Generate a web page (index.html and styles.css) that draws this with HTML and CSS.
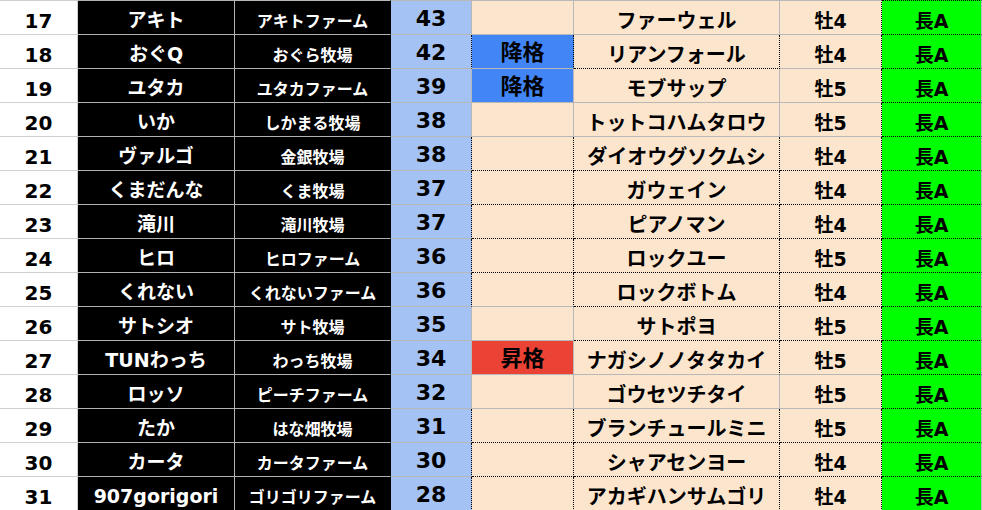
FILE: index.html
```html
<!DOCTYPE html>
<html lang="ja">
<head>
<meta charset="utf-8">
<title>Sheet</title>
<link rel="stylesheet" href="styles.css">
</head>
<body>
<div class="sheet">
  <div class="c a top">17</div><div class="c b top">アキト</div><div class="c f top">アキトファーム</div><div class="c d top">43</div><div class="c e top"></div><div class="c h top">ファーウェル</div><div class="c s top dr">牡4</div><div class="c g top dt db">長A</div>
  <div class="c a">18</div><div class="c b">おぐQ</div><div class="c f">おぐら牧場</div><div class="c d dr">42</div><div class="c e down dr">降格</div><div class="c h dr db">リアンフォール</div><div class="c s dr">牡4</div><div class="c g db">長A</div>
  <div class="c a">19</div><div class="c b">ユタカ</div><div class="c f">ユタカファーム</div><div class="c d">39</div><div class="c e down">降格</div><div class="c h">モブサップ</div><div class="c s dr">牡5</div><div class="c g db">長A</div>
  <div class="c a">20</div><div class="c b">いか</div><div class="c f">しかまる牧場</div><div class="c d">38</div><div class="c e"></div><div class="c h">トットコハムタロウ</div><div class="c s dr">牡5</div><div class="c g db">長A</div>
  <div class="c a">21</div><div class="c b">ヴァルゴ</div><div class="c f">金銀牧場</div><div class="c d dr">38</div><div class="c e dr db"></div><div class="c h dr db">ダイオウグソクムシ</div><div class="c s dr db">牡4</div><div class="c g db">長A</div>
  <div class="c a">22</div><div class="c b">くまだんな</div><div class="c f">くま牧場</div><div class="c d dr">37</div><div class="c e dr db"></div><div class="c h dr db">ガウェイン</div><div class="c s dr db">牡4</div><div class="c g db">長A</div>
  <div class="c a">23</div><div class="c b">滝川</div><div class="c f">滝川牧場</div><div class="c d dr">37</div><div class="c e dr db"></div><div class="c h dr db">ピアノマン</div><div class="c s dr db">牡4</div><div class="c g db">長A</div>
  <div class="c a">24</div><div class="c b">ヒロ</div><div class="c f">ヒロファーム</div><div class="c d dr">36</div><div class="c e dr db"></div><div class="c h dr db">ロックユー</div><div class="c s dr db">牡5</div><div class="c g db">長A</div>
  <div class="c a">25</div><div class="c b">くれない</div><div class="c f">くれないファーム</div><div class="c d dr">36</div><div class="c e dr"></div><div class="c h dr db">ロックボトム</div><div class="c s dr db">牡4</div><div class="c g db">長A</div>
  <div class="c a">26</div><div class="c b">サトシオ</div><div class="c f">サト牧場</div><div class="c d">35</div><div class="c e"></div><div class="c h dr db">サトポヨ</div><div class="c s dr db">牡5</div><div class="c g db">長A</div>
  <div class="c a">27</div><div class="c b">TUNわっち</div><div class="c f">わっち牧場</div><div class="c d">34</div><div class="c e up">昇格</div><div class="c h dr">ナガシノノタタカイ</div><div class="c s dr">牡5</div><div class="c g db">長A</div>
  <div class="c a">28</div><div class="c b">ロッソ</div><div class="c f">ピーチファーム</div><div class="c d">32</div><div class="c e"></div><div class="c h">ゴウセツチタイ</div><div class="c s dr">牡5</div><div class="c g db">長A</div>
  <div class="c a">29</div><div class="c b">たか</div><div class="c f">はな畑牧場</div><div class="c d dr">31</div><div class="c e dr db"></div><div class="c h dr db">ブランチュールミニ</div><div class="c s dr db">牡5</div><div class="c g db">長A</div>
  <div class="c a">30</div><div class="c b">カータ</div><div class="c f">カータファーム</div><div class="c d dr">30</div><div class="c e dr db"></div><div class="c h dr db">シャアセンヨー</div><div class="c s dr db">牡4</div><div class="c g db">長A</div>
  <div class="c a">31</div><div class="c b">907gorigori</div><div class="c f">ゴリゴリファーム</div><div class="c d dr">28</div><div class="c e dr db"></div><div class="c h dr db">アカギハンサムゴリ</div><div class="c s dr db">牡4</div><div class="c g db">長A</div>
</div>
</body>
</html>
```
FILE: styles.css
```css
html, body {
  margin: 0;
  padding: 0;
  background: #ffffff;
  overflow: hidden;
}

.sheet {
  display: grid;
  grid-template-columns: 78px 157px 156px 81px 102px 206px 102px 100px;
  grid-template-rows: 35px repeat(14, 34px);
  width: 982px;
  font-family: "DejaVu Sans", "Noto Sans CJK JP", sans-serif;
  font-weight: 700;
}

.c {
  box-sizing: border-box;
  border-right: 1px solid #b8b8b8;
  border-bottom: 1px solid #b8b8b8;
  display: flex;
  justify-content: center;
  align-items: flex-end;
  line-height: 1;
  white-space: nowrap;
  overflow: hidden;
  color: #000;
}

.top {
  border-top: 1px solid #b8b8b8;
}

/* column A: row number */
.a {
  background: #ffffff;
  font-size: 20px;
  padding-bottom: 3px;
  border-color: #d0d0d0;
}

/* column B: owner name */
.b {
  background: #000;
  color: #fff;
  font-size: 19px;
  padding-bottom: 4px;
  border-color: #b0b0b0;
}

/* column C: farm name */
.f {
  background: #000;
  color: #fff;
  font-size: 16px;
  padding-bottom: 4px;
  border-bottom-color: #b0b0b0;
  border-right-color: #000;
}

/* column D: points */
.d {
  background: #a4c2f4;
  font-size: 22px;
  padding-bottom: 4px;
}

/* column E: grade change */
.e {
  background: #fce5cd;
  font-size: 22px;
  padding-bottom: 4px;
}

.down {
  background: #4285f4;
}

.up {
  background: #ea4335;
}

/* column F: horse */
.h {
  background: #fce5cd;
  font-size: 20px;
  padding-bottom: 3px;
}

/* column G: sex / age */
.s {
  background: #fce5cd;
  font-size: 19px;
  padding-bottom: 3px;
}

/* column H: distance */
.g {
  background: #00ff00;
  font-size: 19px;
  padding-bottom: 3px;
}

.dr {
  border-right: 1px dotted #000;
}

.db {
  border-bottom: 1px dotted #000;
}

.dt {
  border-top: 1px dotted #000;
}
```
